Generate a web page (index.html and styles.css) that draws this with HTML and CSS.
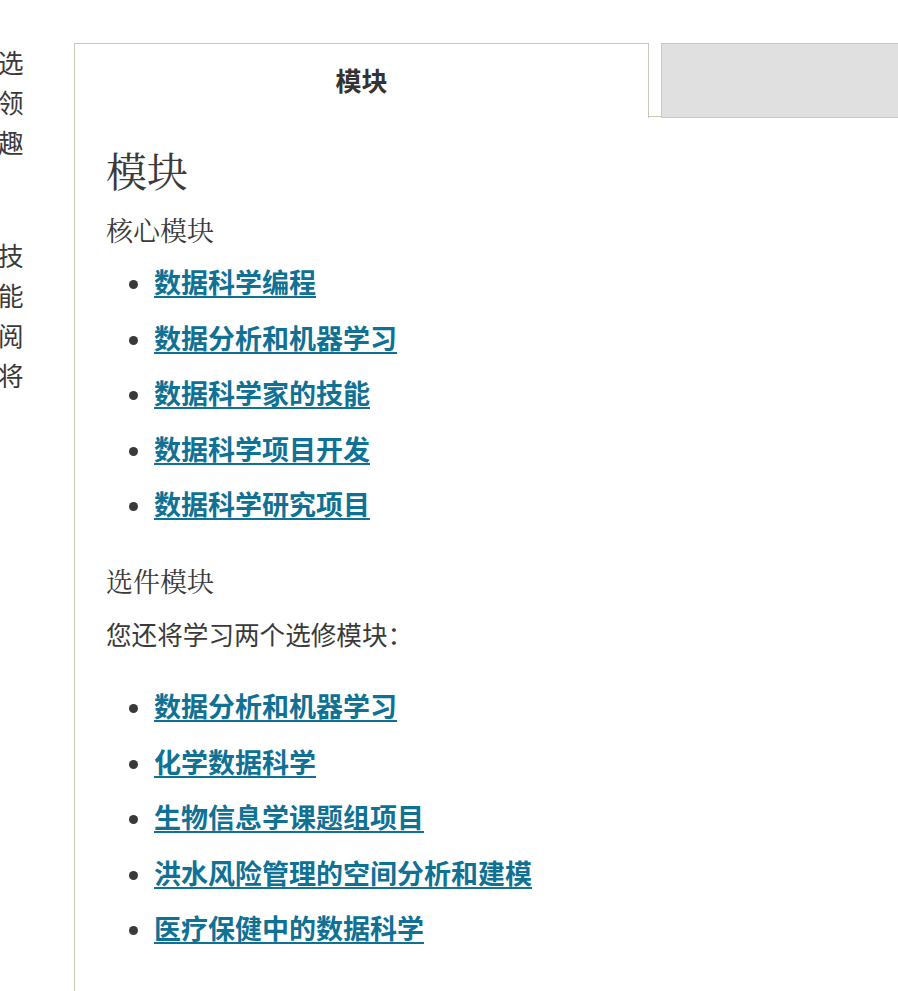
FILE: index.html
```html
<!DOCTYPE html>
<html lang="zh-CN">
<head>
    <meta charset="UTF-8">
    <meta name="viewport" content="width=device-width, initial-scale=1.0">
    <title>模块</title>
    <link rel="stylesheet" href="styles.css">
</head>
<body>
    <div class="page">
        <div class="side">
            <p>选<br>领<br>趣</p>
            <p>技<br>能<br>阅<br>将</p>
        </div>
        <div class="main">
            <div class="tabs">
                <div class="tab active">模块</div>
                <div class="tab-gap"></div>
                <div class="tab"></div>
            </div>
            <div class="panel">
                <h2 class="title">模块</h2>
                <h3 class="subtitle">核心模块</h3>
                <ul class="modules">
                    <li><a href="#">数据科学编程</a></li>
                    <li><a href="#">数据分析和机器学习</a></li>
                    <li><a href="#">数据科学家的技能</a></li>
                    <li><a href="#">数据科学项目开发</a></li>
                    <li><a href="#">数据科学研究项目</a></li>
                </ul>
                <h3 class="subtitle optional">选件模块</h3>
                <p class="note">您还将学习两个选修模块：</p>
                <ul class="modules">
                    <li><a href="#">数据分析和机器学习</a></li>
                    <li><a href="#">化学数据科学</a></li>
                    <li><a href="#">生物信息学课题组项目</a></li>
                    <li><a href="#">洪水风险管理的空间分析和建模</a></li>
                    <li><a href="#">医疗保健中的数据科学</a></li>
                </ul>
            </div>
        </div>
    </div>
</body>
</html>
```

FILE: styles.css
```css
body {
    margin: 0;
    font-family: "Noto Sans CJK SC", "Noto Sans", sans-serif;
    color: #3a3a3a;
    background-color: #fff;
    overflow: hidden;
}

.page {
    display: flex;
    height: 991px;
    overflow: hidden;
}

.side {
    width: 76px;
    flex-shrink: 0;
    overflow: hidden;
    font-size: 25.6px;
    line-height: 40px;
    margin-left: -2px;
}

.side p {
    margin: 42px 0 0;
}

.side p + p {
    margin-top: 73px;
}

.main {
    flex: 1;
    min-width: 0;
}

.tabs {
    display: flex;
    margin-top: 43px;
    height: 75px;
}

.tab {
    box-sizing: border-box;
    flex: 1;
    border: 1px solid #c9c9b6;
    background-color: #e0e0e0;
    margin-right: -20px;
}

.tab.active {
    flex: 0 0 575px;
    margin-right: 0;
    border-bottom: none;
    background-color: #fff;
    font-weight: bold;
    font-size: 26px;
    text-align: center;
    line-height: 72px;
    color: #333;
}

.tab-gap {
    flex: 0 0 12px;
    border-bottom: 1px solid #c9c9b6;
    margin-bottom: 1px;
}

.panel {
    border-left: 1px solid #c9c9b6;
    padding-left: 31px;
    padding-top: 28px;
    height: 845px;
}

.title {
    margin: 0;
    font-family: "Noto Serif CJK SC", "Liberation Serif", "Noto Sans CJK SC", serif;
    font-weight: normal;
    font-size: 41px;
    line-height: 48px;
}

.subtitle {
    margin: 20px 0 0;
    font-family: "Noto Serif CJK SC", "Liberation Serif", "Noto Sans CJK SC", serif;
    font-weight: normal;
    font-size: 27px;
    line-height: 32px;
}

.subtitle.optional {
    margin-top: 43px;
}

.note {
    margin: 19px 0 0;
    font-size: 25.6px;
    line-height: 36px;
}

.modules {
    margin: 18px 0 0;
    padding-left: 48px;
}

.note + .modules {
    margin-top: 36px;
}

.modules li {
    font-size: 27px;
    line-height: 36px;
    margin-bottom: 19.5px;
}

.modules li::marker {
    font-size: 24px;
    color: #3a3a3a;
}

.modules li:last-child {
    margin-bottom: 0;
}

.modules a {
    color: #0f7194;
    font-weight: bold;
    text-decoration: underline;
    text-decoration-thickness: 2px;
    text-underline-offset: 3px;
}
```
